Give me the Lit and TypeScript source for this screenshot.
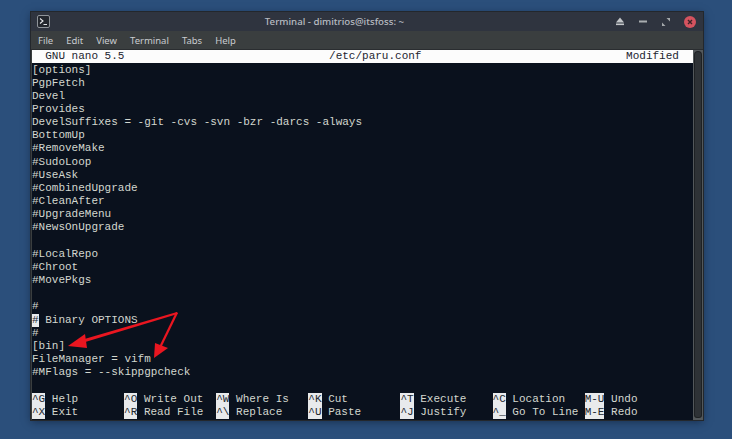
import { LitElement, html, css, svg } from "lit";
import { customElement } from "lit/decorators.js";

const LINES = [
  "[options]","PgpFetch","Devel","Provides","DevelSuffixes = -git -cvs -svn -bzr -darcs -always","BottomUp",
  "#RemoveMake","#SudoLoop","#UseAsk","#CombinedUpgrade","#CleanAfter","#UpgradeMenu","#NewsOnUpgrade","",
  "#LocalRepo","#Chroot","#MovePkgs","","#","@ Binary OPTIONS","#","[bin]","FileManager = vifm","#MFlags = --skippgpcheck",
];
const SHORTCUTS: [string,string][][] = [
  [["^G","Help"],["^O","Write Out"],["^W","Where Is"],["^K","Cut"],["^T","Execute"],["^C","Location"],["M-U","Undo"]],
  [["^X","Exit"],["^R","Read File"],["^\\","Replace"],["^U","Paste"],["^J","Justify"],["^_","Go To Line"],["M-E","Redo"]],
];
const TOP = "  GNU nano 5.5" + " ".repeat(31) + "/etc/paru.conf" + " ".repeat(31) + "Modified";

@customElement("app-root")
export class AppRoot extends LitElement {
  static styles = css`
    :host { display: block; width: 732px; height: 439px; background: #2b4f7b; overflow: hidden; position: relative; }
    .page { padding: 12px 0 0 31px; }
    .win { width: 672px; height: 408px; background: #3a3e3f; display: flex; flex-direction: column; box-shadow: 0 0 0 1px #23272c, 0 2px 8px rgba(10,20,40,.55); font-family: "Noto Sans", "Open Sans", sans-serif; }
    .title { height: 19px; flex: none; background: #2f343f; color: #b8bcc2; font-size: 9.7px; font-weight: 500; display: flex; align-items: center; padding: 0 7px 0 6px; }
    .title .t { flex: 1; text-align: center; padding-left: 11px; }
    .ctrls { display: flex; align-items: center; }
    .ctrl { width: 23px; height: 14px; display: flex; align-items: center; justify-content: center; }
    .close { width: 12px; height: 12px; margin-left: 7px; border-radius: 50%; background: #d4535f; display: flex; align-items: center; justify-content: center; }
    .menu { height: 19px; flex: none; background: #3a3e3f; color: #c9cccf; font-size: 9.5px; display: flex; align-items: center; gap: 13px; padding: 0 0 0 7px; box-shadow: inset 0 -1px #2a2d30; }
    .body { flex: 1; display: flex; min-height: 0; }
    .term { width: 661px; margin-left: 1px; background: #0a111d; color: #d3d7cf; font-family: "Liberation Mono", monospace; font-size: 11px; line-height: 13.17px; }
    .row { height: 13.17px; white-space: pre; }
    .top { background: #fcfcfc; color: #1d2530; margin-bottom: .4px; }
    .cursor { display: inline-block; height: 13.17px; background: #e8eaec; color: #20262e; }
    .bar { display: grid; grid-template-columns: repeat(7, 92.12px); height: 13.17px; white-space: pre; }
    .k { display: inline-block; height: 13.17px; background: #e8eaec; color: #20262e; }
    .gap { height: 13.6px; }
    .sb { flex: 1; background: #53585b; display: flex; justify-content: center; padding: 2px 0 3px; }
    .thumb { width: 6px; border-radius: 3px 3px 2px 2px; background: #2e3236; box-shadow: 0 0 0 1px #1e2124; }
    .arrows { position: absolute; left: 0; top: 0; pointer-events: none; }
  `;
  render() {
    return html`<div class="page"><div class="win">
      <div class="title">
        <svg width="13" height="13" viewBox="0 0 13 13"><rect x=".5" y=".5" width="12" height="12" rx="1.5" fill="#23272e" stroke="#8f9499"/><path d="M3 3.5 6 6 3 8.5" fill="none" stroke="#e6e8ea" stroke-width="1.1"/><path d="M6.5 9.5H10" stroke="#e6e8ea"/></svg>
        <span class="t">Terminal - dimitrios@itsfoss: ~</span>
        <div class="ctrls">
          <span class="ctrl"><svg width="10" height="9" viewBox="0 0 10 9"><path d="M5 .5 9 5.5H1Z" fill="#c4c7ca"/><rect x="1" y="6.5" width="8" height="1.6" fill="#c4c7ca"/></svg></span>
          <span class="ctrl"><svg width="8" height="3" viewBox="0 0 8 3"><rect y=".5" width="8" height="2" fill="#a9adb0"/></svg></span>
          <span class="ctrl"><svg width="8" height="8" viewBox="0 0 8 8"><path d="M4.5 0H8V3.5ZM0 4.5 3.5 8H0Z" fill="#a4a8ab"/></svg></span>
          <span class="close"><svg width="6" height="6" viewBox="0 0 6 6"><path d="M1 1 5 5M5 1 1 5" stroke="#3b2228" stroke-width="1.4"/></svg></span>
        </div>
      </div>
      <div class="menu">${["File","Edit","View","Terminal","Tabs","Help"].map(m => html`<span>${m}</span>`)}</div>
      <div class="body">
        <div class="term">
          <div class="row top">${TOP}</div>
          ${LINES.map(l => l.startsWith("@")
            ? html`<div class="row"><span class="cursor">#</span>${l.slice(1)}</div>`
            : html`<div class="row">${l}</div>`)}
          <div class="gap"></div>
          ${SHORTCUTS.map(r => html`<div class="bar">${r.map(([k,v]) => html`<span><span class="k">${k}</span> ${v}</span>`)}</div>`)}
        </div>
        <div class="sb"><div class="thumb"></div></div>
      </div>
    </div></div>
    <svg class="arrows" width="732" height="439" viewBox="0 0 732 439">
      ${svg`<path d="M177 312 177.6 314 82 343 81 340Z" fill="#ea1620"/>
      <path d="M68 346 85 334 87 348Z" fill="#ea1620"/>
      <path d="M176 312 178 313 161 348 159 347Z" fill="#ea1620"/>
      <path d="M154 358 155 343 168 348Z" fill="#ea1620"/>`}
    </svg>`;
  }
}
